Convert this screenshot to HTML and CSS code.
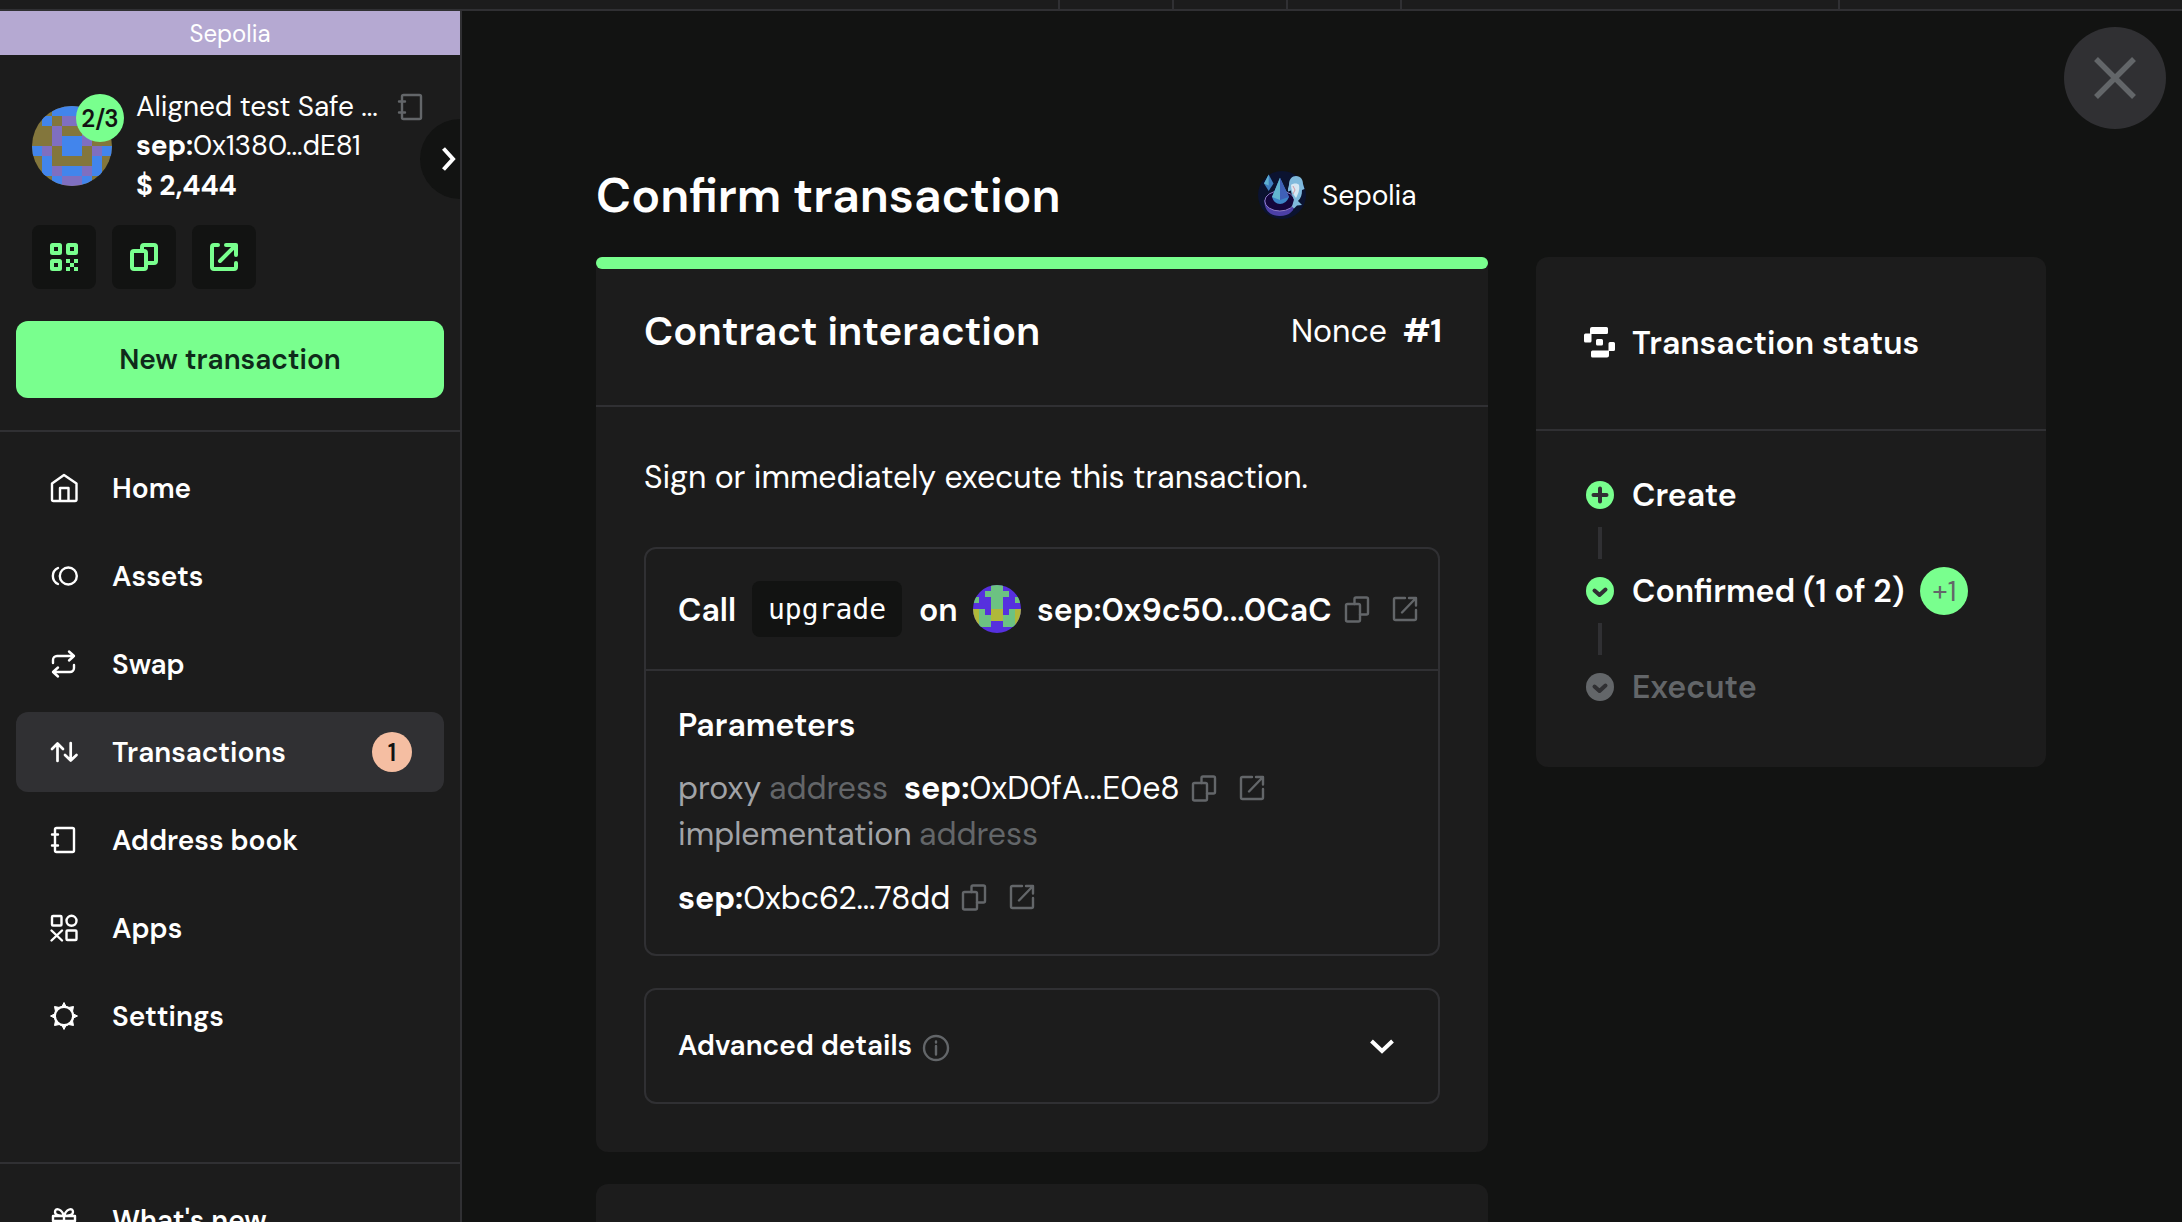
FILE: index.html
```html
<!DOCTYPE html>
<html lang="en">
<head>
<meta charset="utf-8">
<title>Confirm transaction</title>
<link rel="stylesheet" href="styles.css">
</head>
<body>
<svg width="0" height="0" class="defs" aria-hidden="true">
  <symbol id="copy" viewBox="0 0 32 32"><rect x="5" y="11" width="14" height="17.5" rx="1.5"/><path d="M13.5 11V6a1.5 1.5 0 0 1 1.5-1.5h10.500a1.500 1.500 0 0 1 1.500 1.500v14a1.500 1.500 0 0 1-1.500 1.500H19"/></symbol>
  <symbol id="open" viewBox="0 0 32 32"><path d="M16 5H6.500A1.500 1.500 0 0 0 5 6.500v19A1.500 1.500 0 0 0 6.500 27h19a1.500 1.500 0 0 0 1.500-1.500V17M13 19.500 26.500 5.500M20 5h7v7.500"/></symbol>
  <symbol id="book" viewBox="0 0 32 32"><rect x="7" y="4" width="19" height="24" rx="1.500"/><path d="M4 10.500h6M4 21.500h6"/></symbol>
</svg>
<div class="topbar"><i></i><i></i><i></i><i></i><i></i></div>
<div class="app">
  <aside class="sidebar">
    <div class="banner">Sepolia</div>
    <section class="safe">
      <div class="safe-row">
        <div class="avatar-wrap">
          <svg class="avatar" viewBox="0 0 8 8" shape-rendering="crispEdges"><path fill="#83763c" d="M0 0h8v8H0z"/><path fill="#4285ec" d="M2 0h4v1H2zM1 1h1v1H1zM6 1h1v1H6zM3 3h2v2H3zM0 4h1v1H0zM7 4h1v1H7zM1 5h1v2H1zM6 5h1v2H6zM3 6h2v1H3zM2 7h1v1H2zM5 7h1v1H5z"/><path fill="#7f6fc0" d="M3 1h2v1H3zM2 2h1v2H2zM5 2h1v2H5zM1 4h1v1H1zM6 4h1v1H6zM2 6h1v1H2zM5 6h1v1H5zM3 7h2v1H3z"/></svg>
          <span class="threshold">2/3</span>
        </div>
        <div class="safe-info">
          <div class="safe-name">Aligned test Safe ...</div>
          <div class="safe-addr"><b>sep:</b>0x1380...dE81</div>
          <div class="safe-value">$ 2,444</div>
        </div>
        <svg class="icon muted book-mark"><use href="#book"/></svg>
      </div>
      <div class="safe-actions">
        <button class="square"><svg class="icon thick" viewBox="0 0 32 32"><rect x="4" y="4" width="8" height="8" rx=".5"/><rect x="20" y="4" width="8" height="8" rx=".5"/><rect x="4" y="20" width="8" height="8" rx=".5"/><path class="solid" d="M18 18h4v4h4v-4h4v4h-4v4h4v4h-4v-4h-4v4h-4v-4h4v-4h-4z"/></svg></button>
        <button class="square"><svg class="icon thick" viewBox="0 0 32 32"><rect x="4" y="10" width="14" height="18" rx="2"/><path d="M14 10V6a2 2 0 0 1 2-2h10a2 2 0 0 1 2 2v14a2 2 0 0 1-2 2h-8"/></svg></button>
        <button class="square"><svg class="icon thick" viewBox="0 0 32 32"><path d="M10 4H6a2 2 0 0 0-2 2v20a2 2 0 0 0 2 2h20a2 2 0 0 0 2-2v-4M12 20 26.500 5.500M18 4h10v10"/></svg></button>
      </div>
      <span class="collapse"><svg viewBox="0 0 80 80"><path d="M23.500 29.500 33 40l-9.500 10.500"/></svg></span>
    </section>
    <button class="new-tx">New transaction</button>
    <nav class="nav">
      <a class="item"><svg class="icon" viewBox="0 0 32 32"><path d="M4 11.500 16 3l12.500 8.500v16A1.500 1.500 0 0 1 27 29H5.500A1.500 1.500 0 0 1 4 27.500zM12 29V16h8.500v13"/></svg><span>Home</span></a>
      <a class="item"><svg class="icon" viewBox="0 0 32 32"><circle cx="20.300" cy="16" r="8.500"/><path d="M10 8a8.800 8.800 0 0 0 0 16"/></svg><span>Assets</span></a>
      <a class="item"><svg class="icon" viewBox="0 0 32 32"><path d="M5 15v-3a4 4 0 0 1 4-4h17M21 3.500 26 8l-5 4.500M26 17v3a4 4 0 0 1-4 4H5M10 19.500 5 24l5 4.500"/></svg><span>Swap</span></a>
      <a class="item active"><svg class="icon" viewBox="0 0 32 32"><path d="M9.500 25V8M4 13l5.500-5.500L15 13M22.700 7v17M17 19l5.700 5.500L28.500 19" stroke-width="2.700"/></svg><span>Transactions</span><em>1</em></a>
      <a class="item"><svg class="icon"><use href="#book"/></svg><span>Address book</span></a>
      <a class="item"><svg class="icon" viewBox="0 0 32 32"><rect x="4" y="4" width="9.500" height="9.500" rx="1"/><circle cx="23.500" cy="8.800" r="5"/><path d="M3.500 18.500l10.500 10M14 18.500l-10.500 10"/><rect x="18.500" y="18.500" width="10" height="9.500" rx="1"/></svg><span>Apps</span></a>
      <a class="item"><svg class="icon" viewBox="0 0 32 32"><circle cx="16" cy="16" r="9.200"/><path class="solid teeth" d="M14 6.500 16 2.500l2 4zM14 25.500l2 4 2-4zM6.500 14l-4 2 4 2zM25.500 14l4 2-4 2zM11.500 7.500 6.500 6.500l1 5zM20.500 7.500l5-1-1 5zM11.500 24.500l-5 1 1-5zM20.500 24.500l5 1-1-5z"/></svg><span>Settings</span></a>
    </nav>
    <div class="nav-foot">
      <a class="item"><svg class="icon" viewBox="0 0 32 32"><path d="M5 12h22v5H5zM7 17v11h18V17M16 12v16M16 12c-2-7-9-9-9-4 0 3 4 4 9 4 5 0 9-1 9-4 0-5-7-3-9 4"/></svg><span>What's new</span></a>
    </div>
  </aside>
  <main class="main">
    <button class="close"><svg viewBox="0 0 102 102"><path d="m32 32 38 38M70 32 32 70"/></svg></button>
    <div class="grid">
      <header class="head">
        <h1>Confirm transaction</h1>
        <div class="chain">
          <svg viewBox="0 0 48 48">
            <circle cx="24" cy="24" r="24" fill="#0b1330"/>
            <path d="M6.300 29c0 11 6 16 15.500 16S37 40 37.500 30z" fill="#4b3fa6"/>
            <ellipse cx="21.800" cy="30" rx="15" ry="10" fill="#14063c" stroke="#8d7cc6" stroke-width="1"/>
            <path d="M22 6.700 31 26q-3 7-9 7t-8-7z" fill="#3d86c8"/><path d="M22 6.700 14 26l8 3z" fill="#62b6cf"/><path d="M22 6.700V29l9-3z" fill="#3f60b8"/>
            <path d="m10.700 3.500 4.800 9-4.800 7.500L6 12.500z" fill="#3f7fc0"/><path d="M10.700 3.500 6 12.500l4.700 2z" fill="#5fb2d0"/>
            <path d="M31 14c0-6 3-9 7-9 5 0 7 4 7 8l1.500 5-2.500 1c0 5-1 8-4 11l4 4-5 .5-3 3-2-2 2-7c-2-4-3-7-3-9l-3 1 0-3z" fill="#7fb9dc"/>
            <path d="M33 14c2-2 7-2 8 0 1 5-1 9-3 13-3-4-5-8-5-13z" fill="#d6e7f3"/>
            <path d="m35 15 2 4-2 4" fill="none" stroke="#d59aa5"/>
          </svg>
          <span>Sepolia</span>
        </div>
      </header>
      <section class="card tx">
        <div class="progress"></div>
        <div class="card-head"><h2>Contract interaction</h2><p class="nonce"><span>Nonce</span><b>#1</b></p></div>
        <div class="card-body">
          <p class="lead">Sign or immediately execute this transaction.</p>
          <div class="box">
            <div class="call">
              <span class="w">Call</span><code>upgrade</code><span class="w on">on</span>
              <svg class="avatar small" viewBox="0 0 8 8" shape-rendering="crispEdges"><path fill="#5630de" d="M0 0h8v8H0z"/><path fill="#6cc282" d="M3 0h2v4H3zM2 1h4v1H2zM0 2h1v1H0zM7 2h1v1H7zM1 4h1v3H1zM6 4h1v3H6zM2 5h1v2H2zM5 5h1v2H5z"/><path fill="#afb83a" d="M0 4h1v3H0zM7 4h1v3H7zM3 4h2v2H3z"/></svg>
              <span class="target">sep:0x9c50...0CaC</span>
              <svg class="icon muted"><use href="#copy"/></svg><svg class="icon muted"><use href="#open"/></svg>
            </div>
            <div class="params">
              <h3>Parameters</h3>
              <div class="param"><span class="name">proxy</span><span class="type">address</span><span class="addr first"><b>sep:</b>0xD0fA...E0e8</span><svg class="icon muted"><use href="#copy"/></svg><svg class="icon muted"><use href="#open"/></svg></div>
              <div class="param"><span class="name long">implementation</span><span class="type">address</span></div>
              <div class="param last"><span class="addr"><b>sep:</b>0xbc62...78dd</span><svg class="icon muted"><use href="#copy"/></svg><svg class="icon muted"><use href="#open"/></svg></div>
            </div>
          </div>
          <div class="box advanced">
            <h4>Advanced details</h4>
            <svg class="icon muted info" viewBox="0 0 32 32"><circle cx="16" cy="16" r="12"/><path d="M16 14v8.500M16 9.500v1"/></svg>
            <svg class="icon chev" viewBox="0 0 32 32"><path d="m5.500 11 10.500 10L26.500 11"/></svg>
          </div>
        </div>
      </section>
      <aside class="card status">
        <div class="status-head"><svg viewBox="0 0 32 32"><path d="M8 0h14.500A1.500 1.500 0 0 1 24 1.500V5.500A1.500 1.500 0 0 1 22.500 7H7.500v7A1.500 1.500 0 0 1 6 15.500H1.500A1.500 1.500 0 0 1 0 14V8A1.500 1.500 0 0 1 1.500 6.500H6V2a2 2 0 0 1 2-2zM13.500 12h4a1.500 1.500 0 0 1 1.500 1.500v3.500a1.500 1.500 0 0 1-1.500 1.500h-4A1.500 1.500 0 0 1 12 17v-3.500a1.500 1.500 0 0 1 1.500-1.500zM26 15h3.500A1.500 1.500 0 0 1 31 16.500v6a1.500 1.500 0 0 1-1.500 1.500H25v4.500a2 2 0 0 1-2 2H8.500A1.500 1.500 0 0 1 7 29v-4a1.500 1.500 0 0 1 1.500-1.500h16v-7A1.500 1.500 0 0 1 26 15z" fill="#fff"/></svg><h3>Transaction status</h3></div>
        <ol class="steps">
          <li><svg viewBox="0 0 32 32"><circle cx="16" cy="16" r="14"/><path d="M16 9.500v13M9.500 16h13"/></svg><span>Create</span></li>
          <li><svg viewBox="0 0 32 32"><circle cx="16" cy="16" r="14"/><path d="m10.500 15.500 5 4.500 6-5.500"/></svg><span>Confirmed (1 of 2)</span><em>+1</em></li>
          <li class="off"><svg viewBox="0 0 32 32"><circle cx="16" cy="16" r="14"/><path d="m10.500 15.500 5 4.500 6-5.500"/></svg><span>Execute</span></li>
        </ol>
      </aside>
      <section class="card next"></section>
    </div>
  </main>
</div>
</body>
</html>
```
FILE: styles.css
```css
:root {
  --bg: #121312;
  --paper: #1c1c1c;
  --line: #303033;
  --muted: #636669;
  --green: #79ff8e;
  --semi: 630;
}
* { box-sizing: border-box; margin: 0; padding: 0; }
html, body { height: 100%; overflow: hidden; }
body {
  display: flex;
  flex-direction: column;
  background: var(--bg);
  color: #fff;
  font-family: "DM Sans", Inter, "Liberation Sans", sans-serif;
  font-size: 28px;
  font-weight: 400;
}
.defs { position: absolute; }
b { font-weight: 700; }
h1, h2, h3, h4 { font-weight: var(--semi); }
button { border: 0; font: inherit; }
em { font-style: normal; }
.icon {
  flex: none;
  width: 32px;
  height: 32px;
  fill: none;
  stroke: currentColor;
  stroke-width: 2.400;
  stroke-linecap: round;
  stroke-linejoin: round;
}
.icon.thick { stroke-width: 4; }
.icon .solid { fill: currentColor; stroke-width: 0; }
.icon .teeth { stroke-width: 1; }
.muted { color: var(--muted); }

/* top strip */
.topbar {
  display: grid;
  grid-template-columns: 1060px 114px 114px 114px 438px;
  flex: none;
  height: 11px;
  background: var(--paper);
  border-bottom: 2px solid var(--line);
}
.topbar i { border-right: 2px solid var(--line); }
.app { display: flex; flex: 1; min-height: 0; }

/* sidebar */
.sidebar {
  display: flex;
  flex-direction: column;
  flex: none;
  width: 462px;
  overflow: hidden;
  background: var(--paper);
  border-right: 2px solid var(--line);
}
.banner {
  flex: none;
  height: 44px;
  background: #b5a9d2;
  font-size: 24px;
  line-height: 45px;
  text-align: center;
}
.safe { position: relative; padding: 31px 0 0 32px; }
.safe-row { display: flex; align-items: center; height: 119px; }
.avatar-wrap { position: relative; height: 80px; }
.avatar { display: block; flex: none; width: 80px; height: 80px; border-radius: 50%; }
.avatar.small { width: 48px; height: 48px; }
.threshold {
  position: absolute;
  top: -12px;
  left: 44px;
  width: 48px;
  height: 48px;
  border-radius: 50%;
  background: var(--green);
  color: var(--bg);
  font-size: 24px;
  font-weight: 650;
  line-height: 49px;
  text-align: center;
}
.safe-info {
  width: 259px;
  margin-left: 24px;
  padding-top: 1px;
  line-height: 39.600px;
  letter-spacing: -.06px;
  white-space: nowrap;
}
.safe-value { font-weight: 700; }
.book-mark { align-self: flex-start; margin-top: 5px; }
.safe-actions { display: flex; gap: 16px; margin-top: 20px; }
.square {
  display: flex;
  align-items: center;
  justify-content: center;
  width: 64px;
  height: 64px;
  border-radius: 8px;
  background: var(--bg);
  color: var(--green);
}
.collapse {
  position: absolute;
  top: 64px;
  right: -40px;
  width: 80px;
  height: 80px;
  border-radius: 50%;
  background: var(--bg);
}
.collapse svg { display: block; fill: none; stroke: #fff; stroke-width: 4; }
.new-tx {
  flex: none;
  height: 77px;
  margin: 32px 16px;
  border-radius: 12px;
  background: var(--green);
  color: #0f2a1a;
  font-weight: var(--semi);
}
.nav, .nav-foot {
  display: flex;
  flex-direction: column;
  flex: none;
  gap: 8px;
  padding: 16px 16px 0;
  border-top: 2px solid var(--line);
}
.nav { height: 732px; }
.item {
  display: flex;
  align-items: center;
  flex: none;
  height: 80px;
  padding: 0 32px;
  border-radius: 12px;
  font-weight: var(--semi);
}
.item span { margin-left: 32px; padding-top: 1px; }
.item.active { background: var(--line); }
.item em {
  width: 40px;
  height: 40px;
  margin-left: auto;
  border-radius: 50%;
  background: #f5bea2;
  color: var(--bg);
  font-size: 24px;
  line-height: 41px;
  text-align: center;
}

/* main area */
.main { position: relative; flex: 1; padding: 152px 0 0 134px; }
.close {
  position: absolute;
  top: 16px;
  right: 16px;
  width: 102px;
  height: 102px;
  border-radius: 50%;
  background: var(--line);
}
.close svg { display: block; fill: none; stroke: var(--muted); stroke-width: 5.500; }
.grid {
  display: grid;
  grid-template-columns: 892px 510px;
  column-gap: 48px;
  align-items: start;
}
.head {
  display: flex;
  align-items: center;
  grid-column: 1 / -1;
  height: 64px;
  margin-bottom: 30px;
}
h1 { width: 662px; font-size: 48px; }
.chain { display: flex; align-items: center; gap: 16px; }
.chain svg { width: 48px; height: 48px; }
.card { border-radius: 12px; background: var(--paper); }
.tx { height: 895px; border-radius: 6px 6px 12px 12px; }
.progress { height: 12px; border-radius: 6px; background: var(--green); }
.card-head {
  display: flex;
  justify-content: space-between;
  height: 138px;
  padding: 38px 46px 0 48px;
  border-bottom: 2px solid var(--line);
  line-height: 49px;
}
h2 { font-size: 40px; }
.nonce { display: flex; gap: 16px; font-size: 32px; }
.card-body { padding: 48px 48px 0; font-size: 32px; line-height: 44px; }
.lead { letter-spacing: -.06px; }
.box { border: 2px solid var(--line); border-radius: 12px; }
.lead + .box { height: 409px; margin-top: 48px; }
.call {
  display: flex;
  align-items: center;
  height: 122px;
  padding-left: 32px;
  border-bottom: 2px solid var(--line);
  font-weight: var(--semi);
  white-space: nowrap;
}
.call span { padding-top: 1px; }
.call .w { width: 58px; }
.call .on { width: 37px; margin-left: 17px; }
code {
  width: 150px;
  height: 56px;
  margin-left: 16px;
  border-radius: 8px;
  background: var(--bg);
  font: 28px/58px "DejaVu Sans Mono", monospace;
  text-align: center;
}
.call .avatar { margin: 0 16px 0 17px; }
.call .target { width: 304px; letter-spacing: .1px; }
.icon + .icon { margin-left: 16px; }
.params { padding: 32px 32px 0; }
h3 { font-size: 32px; }
.param { display: flex; align-items: center; height: 46px; white-space: nowrap; }
.params h3 + .param { margin-top: 18px; }
.param.last { height: 44px; margin-top: 18px; }
.name { width: 91px; color: #a1a3a7; }
.name.long { width: 241px; }
.type { width: 118px; color: var(--muted); }
.addr.first { width: 284px; margin-left: 17px; }
.param.last .addr { width: 280px; padding-top: 1px; letter-spacing: -.06px; }
.advanced {
  display: flex;
  align-items: center;
  height: 116px;
  margin-top: 32px;
  padding: 0 40px 0 32px;
}
.advanced h4 { font-size: 28px; }
.info { margin: 4px 0 0 8px; }
.advanced .chev { margin-left: auto; stroke-width: 4; stroke-linecap: butt; stroke-linejoin: miter; }
.next { grid-column: 1; height: 200px; margin-top: 32px; }

/* status card */
.status { height: 510px; }
.status-head {
  display: flex;
  align-items: center;
  gap: 16px;
  height: 174px;
  padding-left: 48px;
  border-bottom: 2px solid var(--line);
}
.status-head svg { width: 32px; height: 32px; }
.steps { display: grid; gap: 64px; padding: 48px; list-style: none; }
.steps li {
  position: relative;
  display: flex;
  align-items: center;
  gap: 16px;
  height: 32px;
  font-size: 32px;
  font-weight: var(--semi);
}
.steps svg {
  flex: none;
  width: 32px;
  height: 32px;
  fill: var(--green);
  stroke: var(--line);
  stroke-width: 4;
  stroke-linecap: round;
  stroke-linejoin: round;
}
.steps path { fill: none; }
.steps circle { stroke: none; }
.steps li:not(:last-child)::after {
  content: "";
  position: absolute;
  top: 48px;
  left: 14px;
  width: 4px;
  height: 32px;
  background: var(--line);
}
.steps em {
  width: 48px;
  height: 48px;
  border-radius: 50%;
  background: var(--green);
  color: var(--muted);
  font-size: 28px;
  font-weight: 400;
  line-height: 49px;
  text-align: center;
}
.steps .off { color: var(--muted); }
.steps .off svg { fill: var(--muted); }
```
